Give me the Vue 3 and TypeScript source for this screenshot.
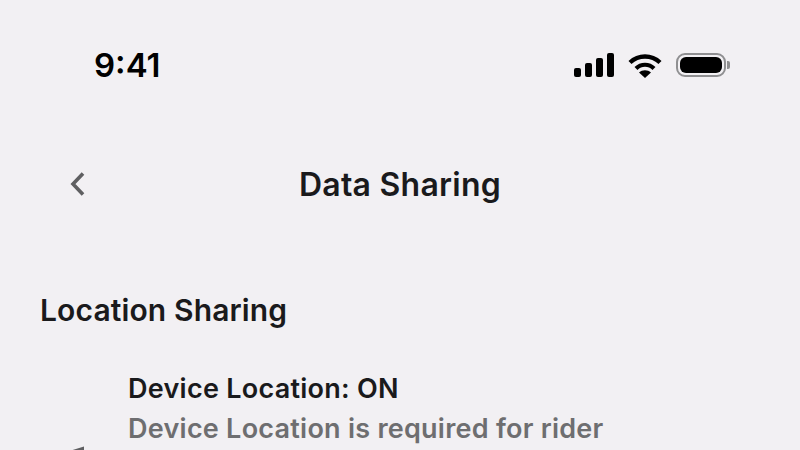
<script setup lang="ts">
const bars = [9, 14, 19, 24]
</script>

<template>
  <div class="screen">
    <header class="status">
      <span class="time">9:41</span>
      <div class="status-icons">
        <div class="signal">
          <span v-for="h in bars" :key="h" class="bar" :style="{ height: h + 'px' }"></span>
        </div>
        <svg class="wifi" width="34" height="25" viewBox="0 0 34 25">
          <path d="M2 9.5C10.5 1.5 23.5 1.5 32 9.5" fill="none" stroke="#000" stroke-width="4.4" />
          <path d="M8 15.5C13 10.5 21 10.5 26 15.5" fill="none" stroke="#000" stroke-width="4.2" />
          <path d="M17 25L11 19.4C14.4 16.6 19.6 16.6 23 19.4Z" fill="#000" />
        </svg>
        <div class="battery">
          <div class="battery-body"><div class="battery-fill"></div></div>
          <span class="battery-cap"></span>
        </div>
      </div>
    </header>

    <nav class="nav">
      <svg class="back" width="18" height="28" viewBox="0 0 18 28">
        <path d="M15 3.5L5 14L15 24.5" fill="none" stroke="#5f5f61" stroke-width="3.6" />
      </svg>
      <h1 class="title">Data Sharing</h1>
    </nav>

    <section class="section">
      <h2 class="section-title">Location Sharing</h2>
      <div class="row">
        <svg class="row-icon" width="30" height="30" viewBox="0 0 30 30">
          <path d="M14 0.5L1 4.5L14 9Z" fill="#5f5f61" />
        </svg>
        <div class="row-text">
          <div class="row-title">Device Location: ON</div>
          <div class="row-sub">Device Location is required for rider</div>
        </div>
      </div>
    </section>
  </div>
</template>

<style>
html,
body {
  margin: 0;
  background: #f2f0f3;
}
</style>

<style scoped>
.screen {
  width: 800px;
  height: 450px;
  overflow: hidden;
  background: #f2f0f3;
  color: #1a1a1c;
  font-family: Inter, "Liberation Sans", sans-serif;
}

.status {
  display: flex;
  align-items: center;
  justify-content: space-between;
  height: 40px;
  padding: 45px 70px 0 94px;
}

.time {
  font-size: 33px;
  font-weight: 600;
  color: #000;
}

.status-icons {
  display: flex;
  align-items: center;
  gap: 14px;
}

.signal {
  display: flex;
  align-items: flex-end;
  gap: 4px;
}

.bar {
  width: 7px;
  background: #000;
  border-radius: 2px;
}

.wifi {
  display: block;
}

.battery {
  display: flex;
  align-items: center;
  gap: 1px;
}

.battery-body {
  box-sizing: border-box;
  width: 50px;
  height: 24px;
  padding: 2px;
  border: 2px solid #8f8f91;
  border-radius: 9px;
}

.battery-fill {
  height: 100%;
  background: #000;
  border-radius: 6px;
}

.battery-cap {
  width: 3px;
  height: 8px;
  background: #8f8f91;
  border-radius: 0 2px 2px 0;
}

.nav {
  position: relative;
  display: flex;
  align-items: center;
  justify-content: center;
  height: 40px;
  margin-top: 79px;
}

.back {
  position: absolute;
  left: 68px;
  top: 6px;
}

.title {
  margin: 0;
  font-size: 32px;
  font-weight: 600;
  letter-spacing: 0.25px;
}

.section {
  padding: 88px 40px 0;
}

.section-title {
  margin: 0;
  font-size: 30px;
  font-weight: 600;
  letter-spacing: 0.13px;
  line-height: 36px;
}

.row {
  display: flex;
  margin-top: 46px;
}

.row-icon {
  flex: none;
  margin: 72px 28px 0 30px;
}

.row-text {
  flex: 1;
}

.row-title {
  font-size: 27px;
  font-weight: 600;
  letter-spacing: 0.26px;
  line-height: 30px;
}

.row-sub {
  margin-top: 10px;
  font-size: 27px;
  font-weight: 600;
  letter-spacing: 0.25px;
  line-height: 30px;
  color: #6e6e70;
}
</style>
